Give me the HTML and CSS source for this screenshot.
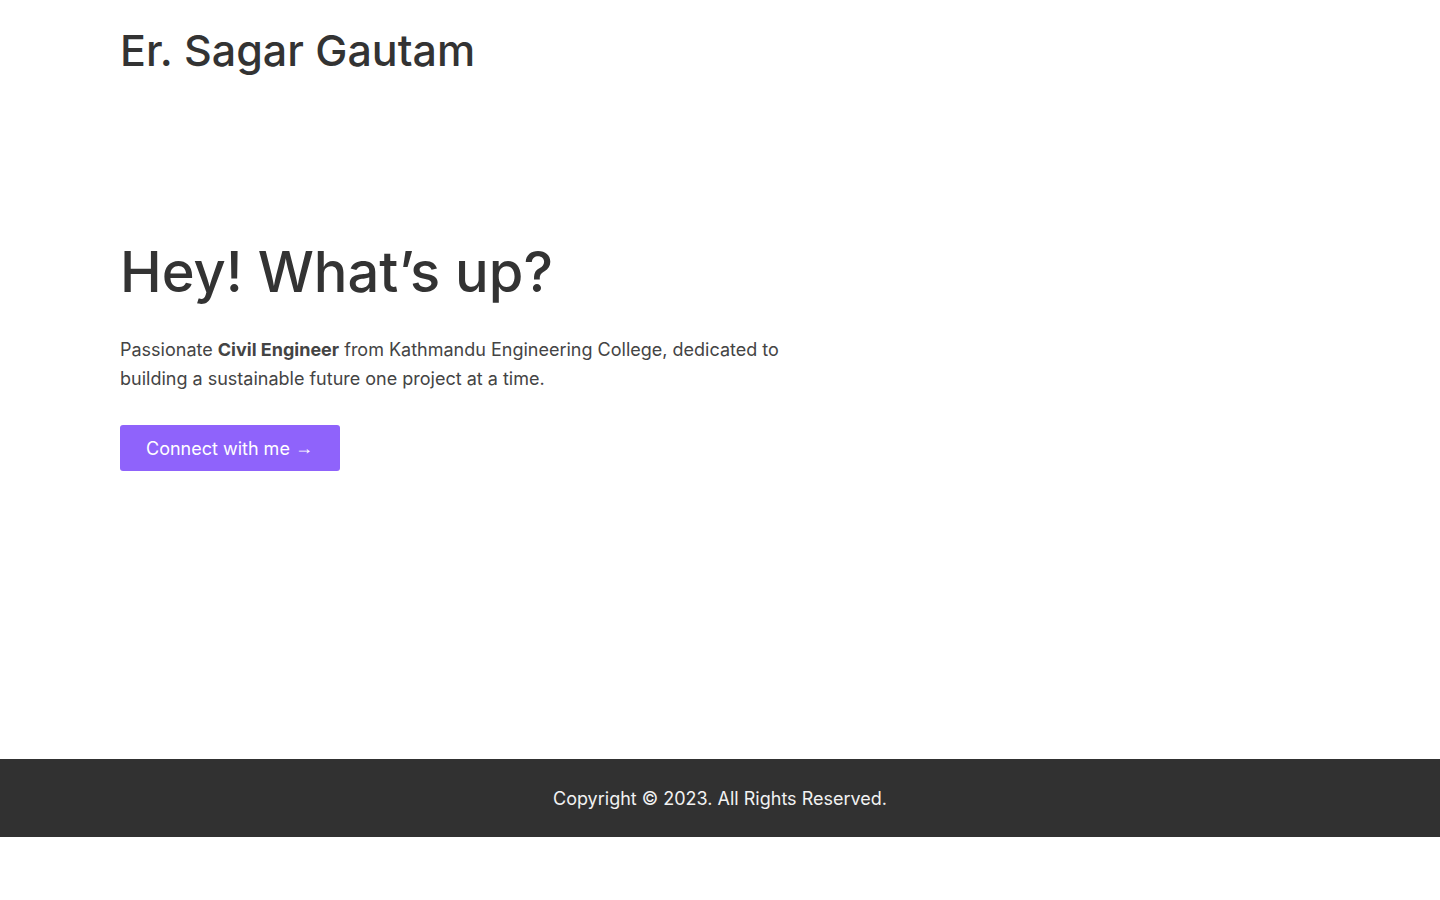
FILE: index.html
```html
<!DOCTYPE html>
<html lang="en">
<head>
<meta charset="utf-8">
<title>Er. Sagar Gautam</title>
<link rel="stylesheet" href="styles.css">
</head>
<body>
<header class="site-header">
  <div class="container">
    <h1 class="brand">Er. Sagar Gautam</h1>
  </div>
</header>
<main class="hero">
  <div class="container">
    <h2 class="hero-title">Hey! What’s up?</h2>
    <p class="hero-text">Passionate <strong>Civil Engineer</strong> from Kathmandu Engineering College, dedicated to building a sustainable future one project at a time.</p>
    <a class="btn" href="#">Connect with me <span class="arrow">→</span></a>
  </div>
</main>
<footer class="site-footer">
  <p>Copyright © 2023. All Rights Reserved.</p>
</footer>
</body>
</html>
```
FILE: styles.css
```css
* { box-sizing: border-box; }
html, body { margin: 0; padding: 0; }
body {
  font-family: Inter, "Noto Sans", sans-serif;
  color: #333333;
  background: #ffffff;
}
.container {
  max-width: 1200px;
  margin: 0 auto;
}
.site-header {
  padding: 24px 0 0;
}
.brand {
  margin: 0;
  font-size: 43px;
  font-weight: 500;
  line-height: 52px;
  color: #333333;
}
.hero {
  height: 683px;
  padding-top: 162px;
}
.hero-title {
  margin: 0;
  font-size: 56px;
  font-weight: 500;
  line-height: 68px;
  color: #333333;
}
.hero-text {
  margin: 29px 0 0;
  max-width: 680px;
  font-size: 18px;
  line-height: 29px;
  color: #444444;
}
.hero-text strong { font-weight: 700; }
.btn {
  display: inline-block;
  margin-top: 32px;
  padding: 0 27px 0 26px;
  height: 46px;
  line-height: 46px;
  background: #8f63fb;
  color: #ffffff;
  font-size: 18px;
  text-decoration: none;
  border-radius: 3px;
}
.arrow {
  font-family: "Liberation Sans", sans-serif;
  vertical-align: 1px;
}
.site-footer {
  background: #313131;
  height: 78px;
  display: flex;
  align-items: center;
  justify-content: center;
}
.site-footer p {
  margin: 0;
  color: #f2f2f2;
  font-size: 18px;
}
```
